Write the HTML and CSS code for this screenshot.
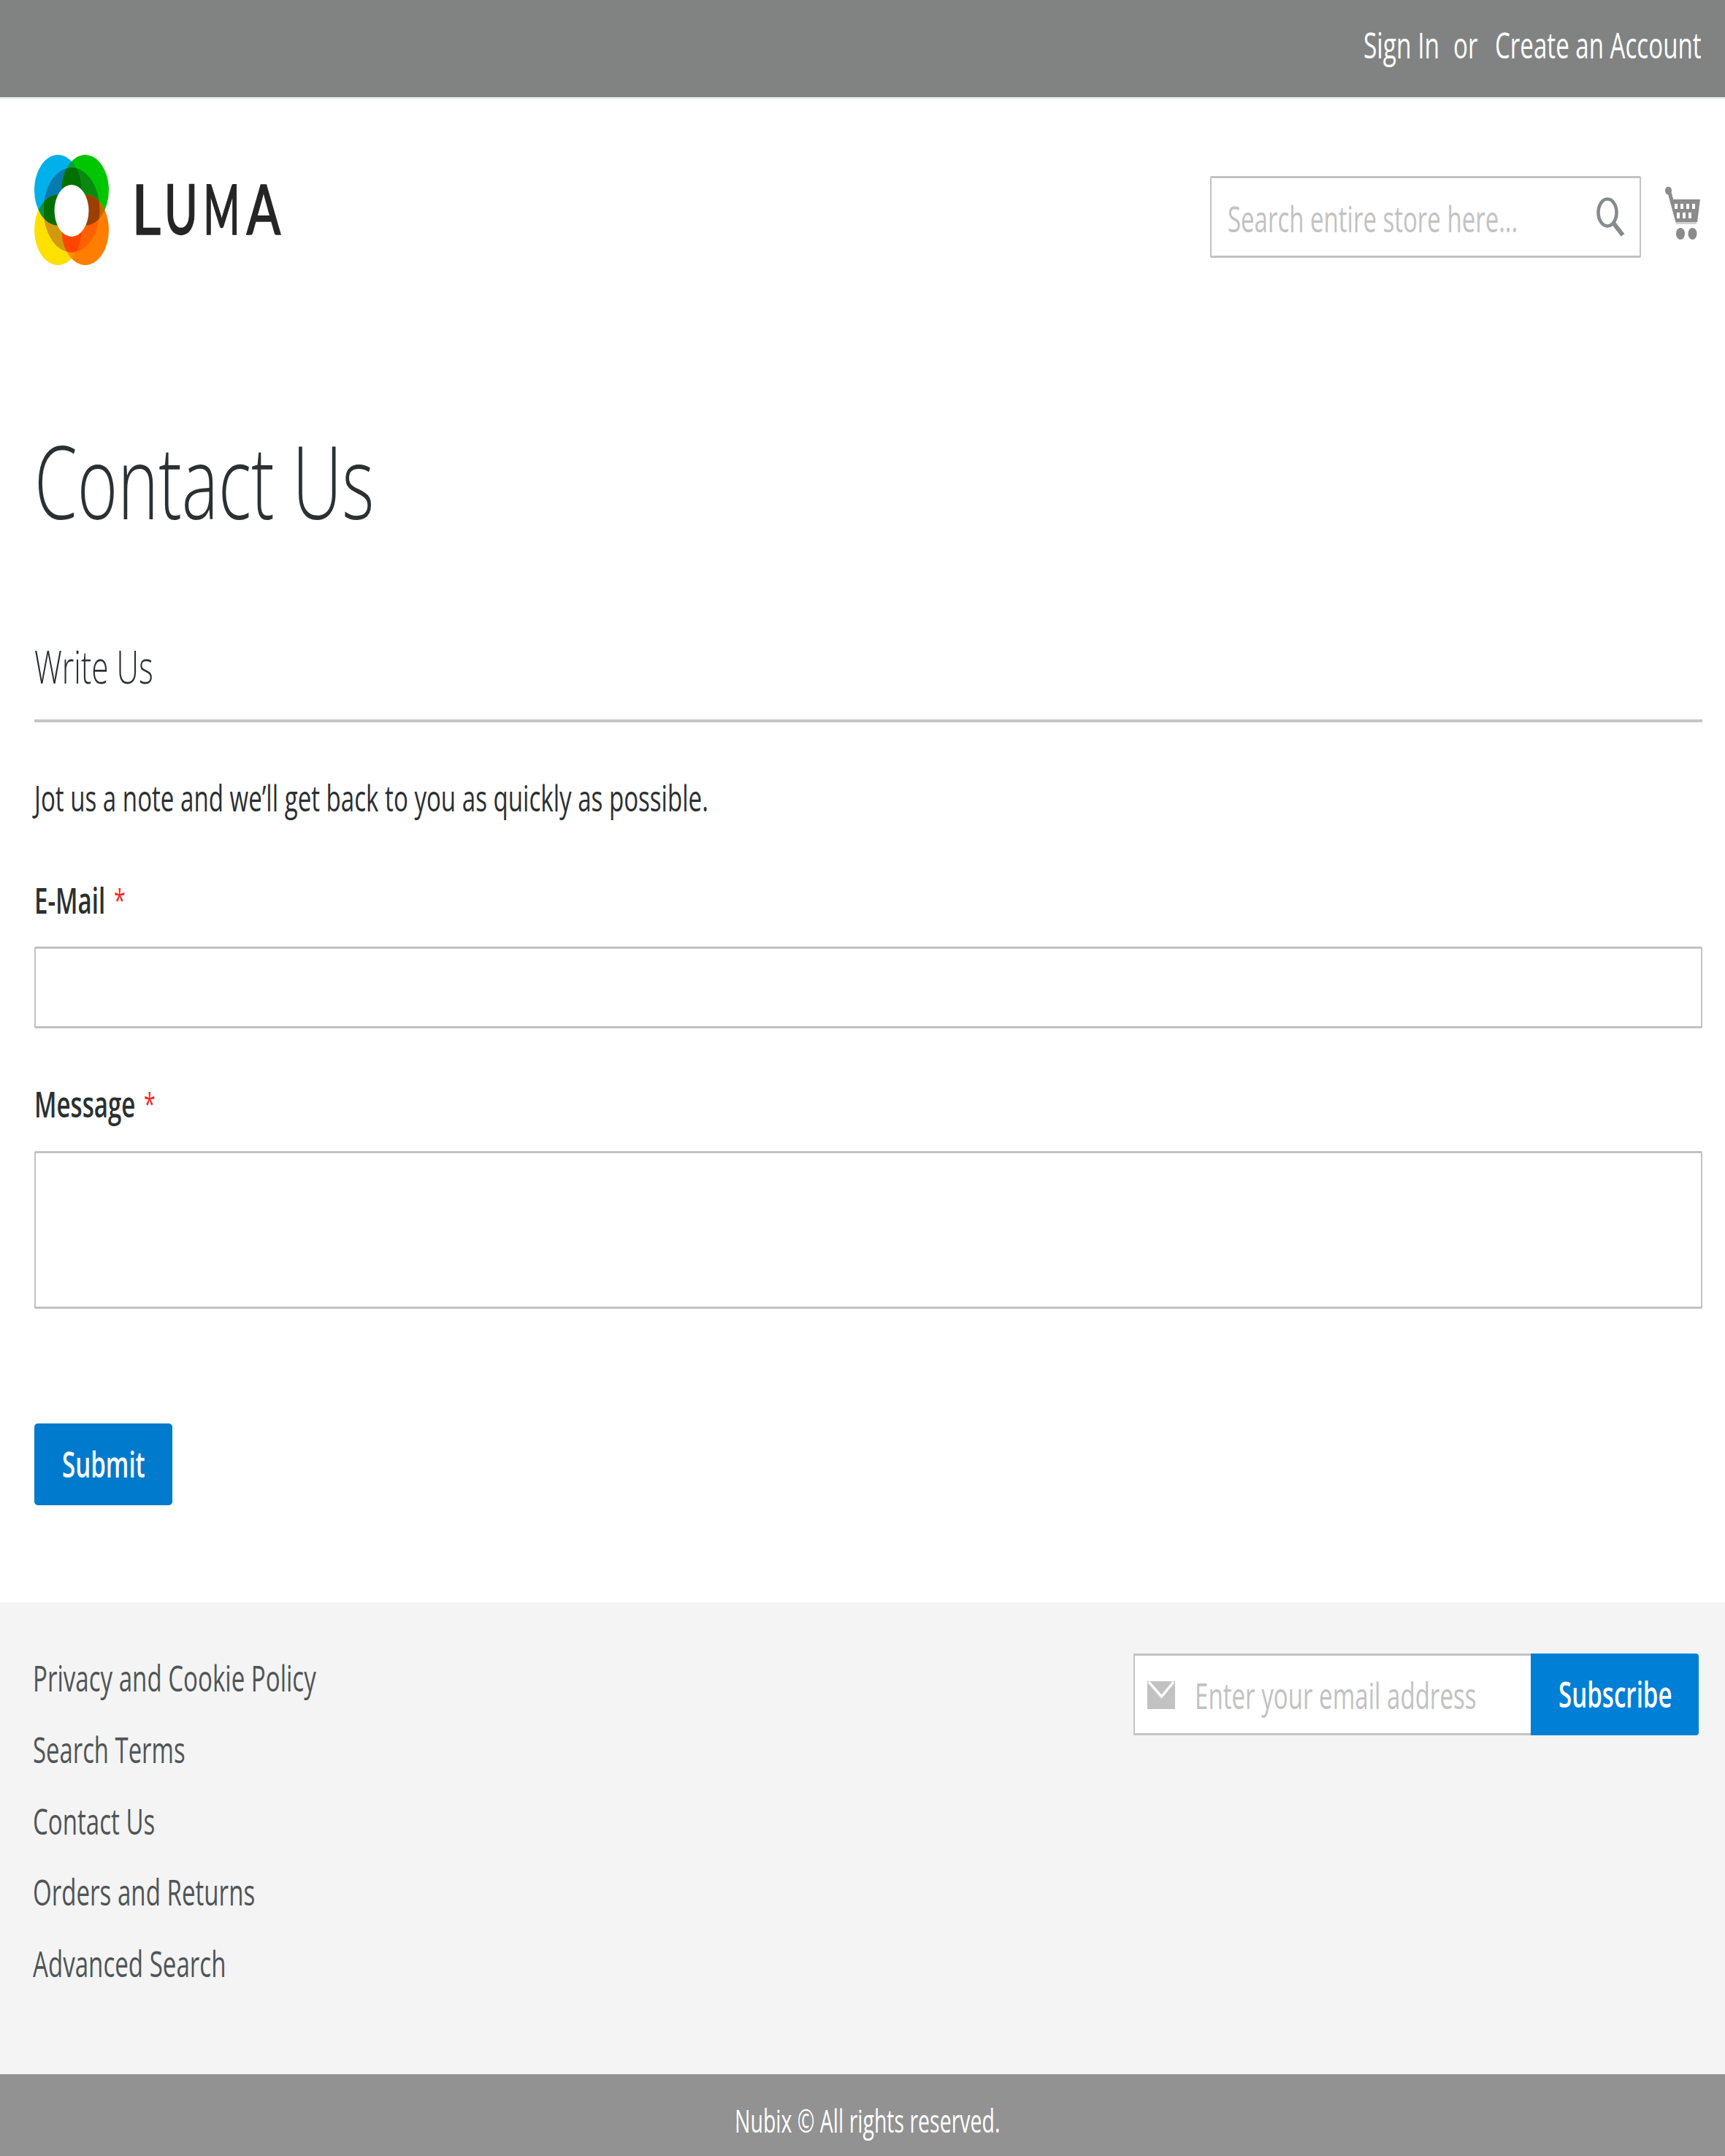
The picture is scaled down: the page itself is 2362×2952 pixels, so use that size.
FILE: index.html
```html
<!DOCTYPE html>
<html lang="en">
<head>
<meta charset="utf-8">
<title>Contact Us</title>
<link rel="stylesheet" href="styles.css">
</head>
<body>
<div class="topbar">
  <a class="label sign-in"><span>Sign In</span></a>
  <span class="label or"><span>or</span></span>
  <a class="label create"><span>Create an Account</span></a>
</div>

<header class="header">
  <svg class="logo" viewBox="0 0 345 151" width="345" height="151">
    <defs>
      <clipPath id="ring"><ellipse cx="51" cy="75.5" rx="38.5" ry="58"/></clipPath>
      <clipPath id="blue"><ellipse cx="32.3" cy="48.3" rx="32.3" ry="48.3"/></clipPath>
      <clipPath id="orange"><ellipse cx="69.7" cy="102.7" rx="32.3" ry="48.3"/></clipPath>
    </defs>
    <ellipse cx="32.3" cy="48.3" rx="32.3" ry="48.3" fill="#00b0ea"/>
    <ellipse cx="69.7" cy="48.3" rx="32.3" ry="48.3" fill="#00c600"/>
    <ellipse cx="32.3" cy="102.7" rx="32.3" ry="48.3" fill="#ffe000"/>
    <ellipse cx="69.7" cy="102.7" rx="32.3" ry="48.3" fill="#ff7e00"/>
    <g clip-path="url(#blue)">
      <ellipse cx="69.7" cy="48.3" rx="32.3" ry="48.3" fill="#00a043"/>
      <ellipse cx="32.3" cy="102.7" rx="32.3" ry="48.3" fill="#009247"/>
    </g>
    <g clip-path="url(#orange)">
      <ellipse cx="69.7" cy="48.3" rx="32.3" ry="48.3" fill="#c86a00"/>
      <ellipse cx="32.3" cy="102.7" rx="32.3" ry="48.3" fill="#ff9000"/>
    </g>
    <g clip-path="url(#ring)">
      <ellipse cx="32.3" cy="48.3" rx="32.3" ry="48.3" fill="#057bb0"/>
      <ellipse cx="69.7" cy="48.3" rx="32.3" ry="48.3" fill="#088a10"/>
      <ellipse cx="32.3" cy="102.7" rx="32.3" ry="48.3" fill="#d19a0c"/>
      <ellipse cx="69.7" cy="102.7" rx="32.3" ry="48.3" fill="#ff6000"/>
      <g clip-path="url(#blue)">
        <ellipse cx="69.7" cy="48.3" rx="32.3" ry="48.3" fill="#007000"/>
        <ellipse cx="32.3" cy="102.7" rx="32.3" ry="48.3" fill="#007000"/>
      </g>
      <g clip-path="url(#orange)">
        <ellipse cx="69.7" cy="48.3" rx="32.3" ry="48.3" fill="#9b4000"/>
        <ellipse cx="32.3" cy="102.7" rx="32.3" ry="48.3" fill="#ff4600"/>
      </g>
    </g>
    <ellipse cx="51" cy="76.5" rx="23.5" ry="35.5" fill="#fff"/>
    <g class="wordmark">
      <text transform="translate(133.6 108.5) scale(.82 1)">L</text>
      <text transform="translate(178 108.5) scale(.66 1)">U</text>
      <text transform="translate(231.500 108.5) scale(.57 1)">M</text>
      <text transform="translate(290.500 108.5) scale(.73 1)">A</text>
    </g>
  </svg>
  <div class="search">
    <span class="label search-text"><span>Search entire store here...</span></span>
    <svg class="search-icon" width="39" height="56" viewBox="0 0 39 56">
      <ellipse cx="15" cy="21" rx="12.5" ry="18.5" fill="none" stroke="#858b8d" stroke-width="4.6"/>
      <path d="M23 35L36 52" stroke="#858b8d" stroke-width="6" fill="none"/>
    </svg>
  </div>
  <svg class="cart" width="48" height="74" viewBox="0 0 48 74">
    <ellipse cx="4.5" cy="6" rx="4.5" ry="5.5" fill="#8b8b8b"/>
    <path d="M5 5L17 49" stroke="#8b8b8b" stroke-width="5" fill="none"/>
    <path d="M9 18H48L44 49H15Z" fill="#8b8b8b"/>
    <path d="M15 49H43V52H15Z" fill="#d2d2d2"/>
    <path d="M13 24h4v7h-4zM21 24h4v7h-4zM29 24h4v7h-4zM37 24h4v7h-4zM16 36h4v8h-4zM24 36h4v8h-4zM32 36h4v8h-4z" fill="#fff"/>
    <ellipse cx="21" cy="65" rx="6" ry="8" fill="#8b8b8b"/>
    <ellipse cx="37.500" cy="65" rx="6" ry="8" fill="#8b8b8b"/>
  </svg>
</header>

<main class="main">
  <h1 class="title"><span>Contact Us</span></h1>
  <h2 class="legend"><span>Write Us</span></h2>
  <p class="note"><span>Jot us a note and we’ll get back to you as quickly as possible.</span></p>
  <div class="field">
    <label class="field-label"><span class="name email-name"><span>E-Mail</span></span><span class="star">*</span></label>
    <input class="control email" type="text">
  </div>
  <div class="field">
    <label class="field-label"><span class="name message-name"><span>Message</span></span><span class="star">*</span></label>
    <textarea class="control message"></textarea>
  </div>
  <button class="button submit"><span class="label"><span>Submit</span></span></button>
</main>

<footer class="footer">
  <nav class="links">
    <a class="link privacy"><span>Privacy and Cookie Policy</span></a>
    <a class="link terms"><span>Search Terms</span></a>
    <a class="link contact"><span>Contact Us</span></a>
    <a class="link orders"><span>Orders and Returns</span></a>
    <a class="link advanced"><span>Advanced Search</span></a>
  </nav>
  <div class="newsletter">
    <div class="newsletter-input">
      <svg width="38" height="38" viewBox="0 0 38 38">
        <path d="M0 0H38V38H0Z" fill="#c2c2c2"/>
        <path d="M2 1L19.500 21L36 1" stroke="#fff" stroke-width="3.500" fill="none"/>
      </svg>
      <span class="label newsletter-text"><span>Enter your email address</span></span>
    </div>
    <button class="button subscribe"><span class="label"><span>Subscribe</span></span></button>
  </div>
</footer>
<div class="copyright"><span class="label"><span>Nubix © All rights reserved.</span></span></div>
</body>
</html>
```
FILE: styles.css
```css
* { box-sizing: border-box; }

body {
  margin: 0;
  background: #fff;
  color: #2b3032;
  font-family: "Open Sans", sans-serif;
  font-size: 48.6px;
  line-height: 60px;
  white-space: nowrap;
  overflow-x: hidden;
}

/* Condensed lettering: each text sits in a box of its final width. */
.label, .name, .link { display: block; height: 60px; }
.label > span, .name > span, .link > span, .note > span,
.title > span, .legend > span, .star {
  display: inline-block;
  transform: scaleX(var(--sx, .681));
  transform-origin: 0 50%;
}

.topbar {
  display: flex;
  justify-content: flex-end;
  height: 136px;
  padding: 31px 33px 0 0;
  background: #818382;
  border-bottom: 3px solid #ebedec;
  color: #fff;
}
.sign-in { --sx: .689; width: 103px; margin-right: 20px; }
.or { width: 35px; margin-right: 22px; }
.create { width: 282px; }

.header {
  display: flex;
  align-items: flex-start;
  height: 441px;
  padding: 76px 34px 0 47px;
}
.wordmark { font-family: Lato, sans-serif; font-size: 94px; font-weight: 500; fill: #252525; stroke: #252525; stroke-width: 1.5px; }
.search {
  display: flex;
  width: 590px;
  height: 112px;
  margin: 29px 33px 0 auto;
  padding: 25px 0 0 22px;
  border: solid #c2c2c2;
  border-width: 3px 2px;
  border-radius: 2px;
  color: #c2c2c2;
}
.search-text { --sx: .679; width: 505px; }
.search-icon { margin-top: 1px; }
.cart { margin-top: 43px; }

.main { padding: 0 31px 0 47px; }
.title, .legend, .note { margin: 0; font-weight: 300; }
.title { height: 160px; font-size: 139px; line-height: 160px; }
.legend {
  --sx: .679;
  height: 117px;
  margin-top: 135px;
  border-bottom: 4px solid #c6c6c6;
  font-size: 62.5px;
  line-height: 80px;
}
.note { height: 60px; margin-top: 73px; font-weight: 400; }
.field { display: flex; flex-direction: column; margin-top: 80px; }
.field + .field { margin-top: 73px; }
.field-label { display: flex; height: 60px; font-weight: 600; }
.email-name { width: 109px; }
.message-name { width: 150px; }
.star { color: #f02b2b; font-size: 42px; font-weight: 400; }
.control {
  width: 100%;
  margin: 34px 0 0;
  padding: 0 20px;
  background: #fff;
  border: solid #c2c2c2;
  border-width: 3px 2px;
  border-radius: 2px;
  resize: none;
}
.email { height: 112px; }
.message { height: 216px; margin-top: 35px; }
.button {
  display: block;
  height: 112px;
  padding: 0 0 3px 38px;
  border: 0;
  background: #007acc;
  color: #fff;
  font: 600 48.6px/60px "Open Sans", sans-serif;
  text-align: left;
}
.submit { width: 189px; margin-top: 157px; border-radius: 5px; }

.footer {
  display: flex;
  justify-content: space-between;
  height: 646px;
  margin-top: 133px;
  padding: 70px 36px 0 45px;
  background: #f4f4f4;
  color: #505557;
}
.links { display: flex; flex-direction: column; gap: 37.8px; width: 400px; padding-top: 3px; }
.terms { --sx: .676; }
.newsletter { display: flex; height: 112px; }
.newsletter-input {
  display: flex;
  width: 544px;
  padding: 24px 0 0 17px;
  background: #fff;
  border: solid #c2c2c2;
  border-width: 3px 0 3px 2px;
  color: #c2c2c2;
}
.newsletter-input svg { flex: none; margin: 11px 27px 0 0; }
.newsletter-text { width: 400px; }
.subscribe { width: 230px; background: #007fd6; border-radius: 0 4px 4px 0; }

.copyright {
  --sx: .662;
  height: 112px;
  padding: 34px 0 0 1006px;
  background: #929292;
  color: #fff;
  font-size: 43px;
}
```
